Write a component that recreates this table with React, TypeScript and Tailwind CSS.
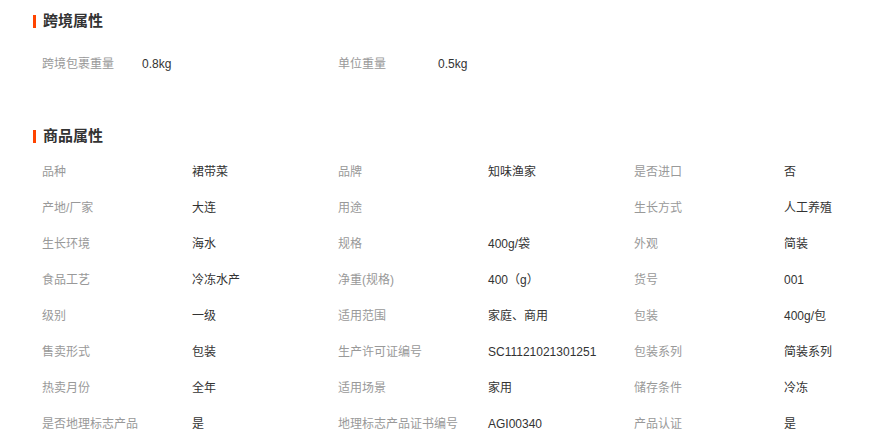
const crossBorder: [string, string][] = [
  ["跨境包裹重量", "0.8kg"],
  ["单位重量", "0.5kg"],
];

const goods: [string, string][] = [
  ["品种", "裙带菜"],
  ["品牌", "知味渔家"],
  ["是否进口", "否"],
  ["产地/厂家", "大连"],
  ["用途", ""],
  ["生长方式", "人工养殖"],
  ["生长环境", "海水"],
  ["规格", "400g/袋"],
  ["外观", "简装"],
  ["食品工艺", "冷冻水产"],
  ["净重(规格)", "400（g）"],
  ["货号", "001"],
  ["级别", "一级"],
  ["适用范围", "家庭、商用"],
  ["包装", "400g/包"],
  ["售卖形式", "包装"],
  ["生产许可证编号", "SC11121021301251"],
  ["包装系列", "简装系列"],
  ["热卖月份", "全年"],
  ["适用场景", "家用"],
  ["储存条件", "冷冻"],
  ["是否地理标志产品", "是"],
  ["地理标志产品证书编号", "AGI00340"],
  ["产品认证", "是"],
];

function Title({ text }: { text: string }) {
  return (
    <div className="flex items-center h-5">
      <span className="w-[3px] h-[13px] bg-[#ff4400]" />
      <span className="ml-[7px] text-[15px] font-bold text-[#333]">{text}</span>
    </div>
  );
}

export default function App() {
  return (
    <div
      className="w-[888px] h-[446px] bg-white overflow-hidden pl-[33px]"
      style={{ fontFamily: '"Liberation Sans", "Noto Sans CJK SC", sans-serif' }}
    >
      <div className="pt-[11px]">
        <Title text="跨境属性" />
      </div>
      <div className="mt-[15px] pl-[9px] grid grid-cols-[296px_296px]">
        {crossBorder.map(([k, v]) => (
          <div key={k} className="flex items-center h-9 text-xs">
            <span className="w-[100px] text-[#999]">{k}</span>
            <span className="text-[#333]">{v}</span>
          </div>
        ))}
      </div>
      <div className="mt-[44px]">
        <Title text="商品属性" />
      </div>
      <div className="mt-[8px] pl-[9px] grid grid-cols-[296px_296px_254px]">
        {goods.map(([k, v]) => (
          <div key={k} className="flex items-center h-9 text-xs">
            <span className="w-[150px] shrink-0 text-[#999]">{k}</span>
            <span className="text-[#333]">{v}</span>
          </div>
        ))}
      </div>
    </div>
  );
}
